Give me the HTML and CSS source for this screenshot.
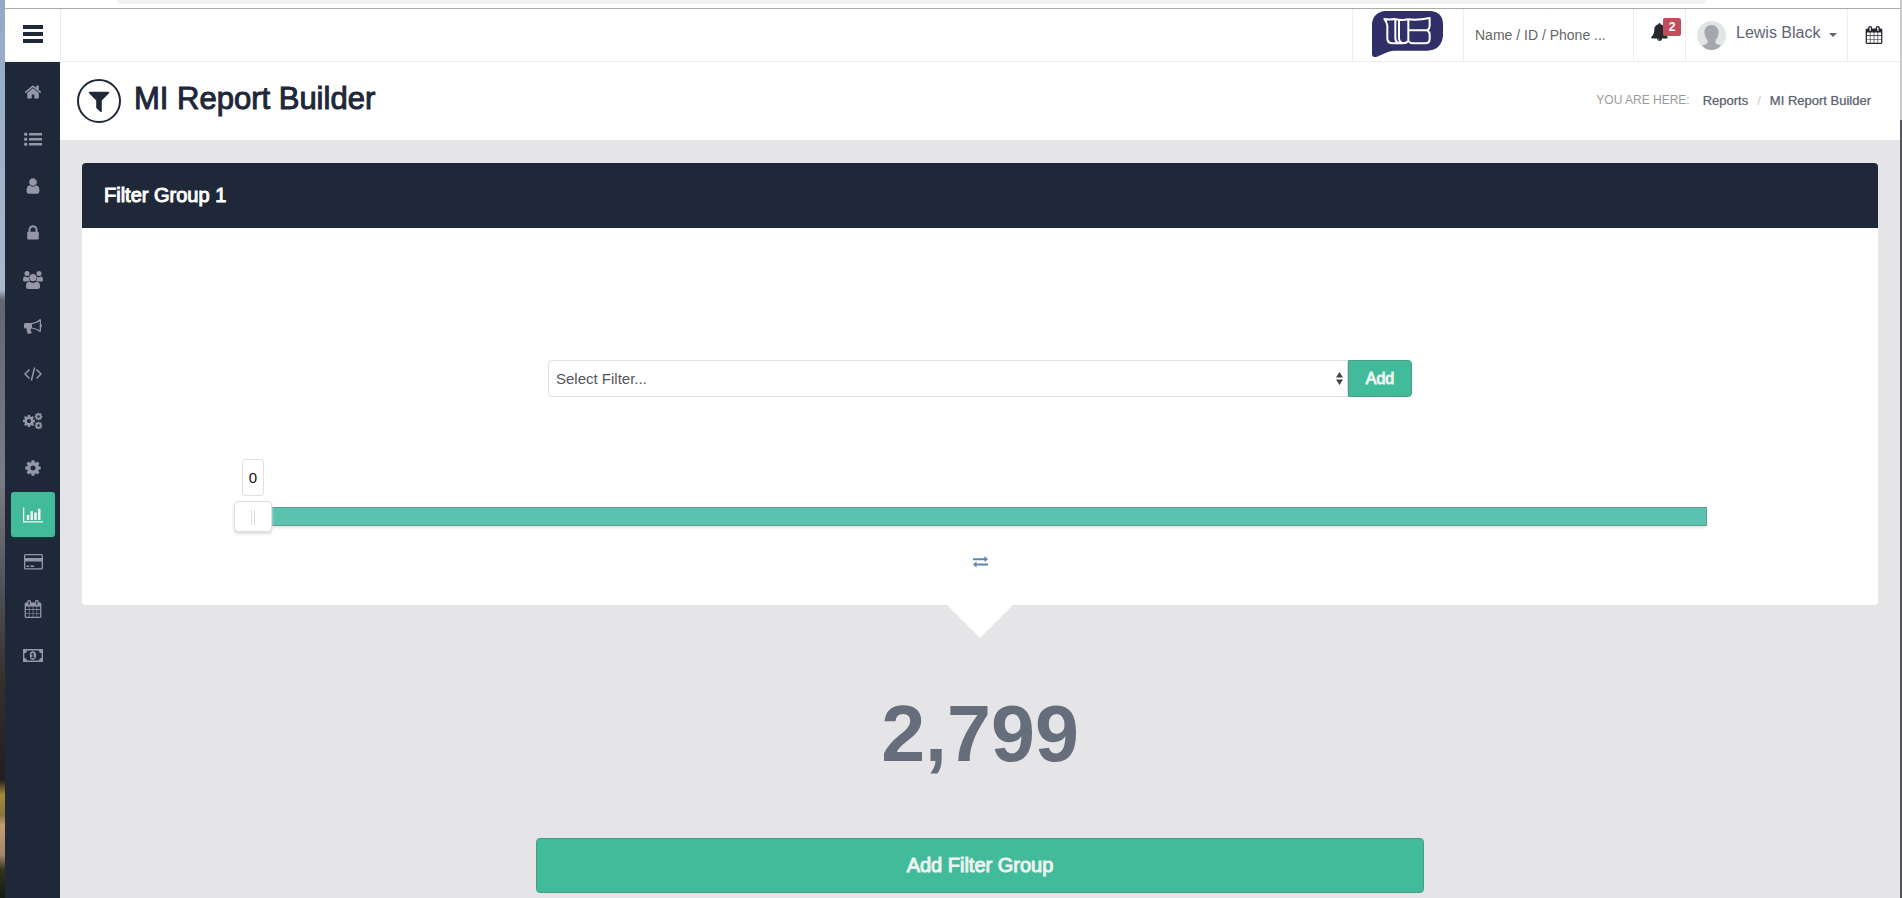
FILE: index.html
```html
<!DOCTYPE html>
<html lang="en">
<head>
<meta charset="utf-8">
<title>MI Report Builder</title>
<link rel="stylesheet" href="styles.css">
</head>
<body>
<svg class="sprite" aria-hidden="true">
  <symbol id="cog" viewBox="0 0 1792 1792"><path d="M1152 896q0-106-75-181t-181-75-181 75-75 181 75 181 181 75 181-75 75-181zm512-109v222q0 12-8 23t-20 13l-185 28q-19 54-39 91 35 50 107 138 10 12 10 25t-9 23q-27 37-99 108t-94 71q-12 0-26-9l-138-108q-44 23-91 38-16 136-29 186-7 28-36 28h-222q-14 0-24.500-8.500t-11.500-21.500l-28-184q-49-16-90-37l-141 107q-10 9-25 9-14 0-25-11-126-114-165-168-7-10-7-23 0-12 8-23 15-21 51-66.500t54-70.500q-27-50-41-99l-183-27q-13-2-21-12.500t-8-23.500v-222q0-12 8-23t19-13l186-28q14-46 39-92-40-57-107-138-10-12-10-24 0-10 9-23 26-36 98.500-107.500t94.500-71.500q13 0 26 10l138 107q44-23 91-38 16-136 29-186 7-28 36-28h222q14 0 24.500 8.500t11.500 21.500l28 184q49 16 90 37l142-107q9-9 24-9 13 0 25 10 129 119 165 170 7 8 7 22 0 12-8 23-15 21-51 66.500t-54 70.500q26 50 41 98l183 28q13 2 21 12.500t8 23.500z"/></symbol>
  <symbol id="calendar" viewBox="0 0 1792 1792"><path d="M192 1664h288v-288h-288v288zm352 0h320v-288h-320v288zm-352-352h288v-320h-288v320zm352 0h320v-320h-320v320zm-352-384h288v-288h-288v288zm736 736h320v-288h-320v288zm-384-736h320v-288h-320v288zm768 736h288v-288h-288v288zm-384-352h320v-320h-320v320zm-352-864v-288q0-13-9.500-22.500t-22.500-9.500h-64q-13 0-22.500 9.500t-9.500 22.500v288q0 13 9.500 22.500t22.500 9.500h64q13 0 22.500-9.500t9.500-22.500zm736 864h288v-320h-288v320zm-384-384h320v-288h-320v288zm384 0h288v-288h-288v288zm32-480v-288q0-13-9.500-22.500t-22.500-9.500h-64q-13 0-22.500 9.500t-9.500 22.500v288q0 13 9.500 22.500t22.500 9.500h64q13 0 22.500-9.500t9.500-22.500zm384-64v1280q0 52-38 90t-90 38h-1408q-52 0-90-38t-38-90v-1280q0-52 38-90t90-38h128v-96q0-66 47-113t113-47h64q66 0 113 47t47 113v96h384v-96q0-66 47-113t113-47h64q66 0 113 47t47 113v96h128q52 0 90 38t38 90z"/></symbol>
</svg>
<div class="window">
  <div class="chrome"><div class="address"></div></div>
  <header class="topbar">
    <button class="menu" type="button" aria-label="Toggle menu">
      <svg width="22" height="18" viewBox="0 0 22 18"><path d="M1 0h20v4H1zM1 7h20v4H1zM1 14h20v4H1z"/></svg>
    </button>
    <a class="cell brand" href="#" aria-label="Home page">
      <svg width="71" height="46" viewBox="0 0 213 138">
        <path class="bubble" d="M38 0H176Q213 4 213 40V74Q209 116 166 119H64Q52 120 42 125L15 137Q0 141 0 130V40Q2 5 38 0Z"/>
        <path class="mark" d="M37 24Q52 27 68 24Q88 29 108 25Q140 28 173 21V44Q173 53 166 58Q173 63 173 70V84Q173 97 160 97H124Q114 97 109 90Q103 97 92 97H62Q48 97 46 84V44Q44 32 37 24ZM70 26V80Q70 92 80 96M81 29V84Q82 92 90 96M109 27V90M110 58H166"/>
      </svg>
    </a>
    <div class="cell search"><input type="text" aria-label="Search" placeholder="Name / ID / Phone ..."></div>
    <button class="cell alerts" type="button" aria-label="Notifications">
      <svg width="17" height="18" viewBox="64 0 1664 1792"><path d="M912 1696q0-16-16-16-59 0-101.500-42.500t-42.500-101.500q0-16-16-16t-16 16q0 73 51.500 124.500t124.500 51.500q16 0 16-16zm816-288q0 52-38 90t-90 38h-448q0 106-75 181t-181 75-181-75-75-181h-448q-52 0-90-38t-38-90q50-42 91-88t85-119.500 74.500-158.500 50-206 19.500-260q0-152 117-282.500t307-158.500q-8-19-8-39 0-40 28-68t68-28 68 28 28 68q0 20-8 39 190 28 307 158.500t117 282.500q0 139 19.500 260t50 206 74.500 158.500 85 119.500 91 88z"/></svg>
      <span class="badge">2</span>
    </button>
    <button class="cell user" type="button">
      <svg width="29" height="29" viewBox="0 0 29 29"><circle cx="14.500" cy="14.500" r="14.500" fill="#e3e4e6"/><path fill="#a4a7ad" d="M14.500 4C19 4 21.500 7 21.500 11Q21.500 16 18.500 19V22Q19 23 24 24.500Q20 29 14.500 29T5 24.500Q10 23 10.500 22V19Q7.500 16 7.500 11C7.500 7 10 4 14.500 4Z"/></svg>
      <span>Lewis Black</span>
      <i class="caret"></i>
    </button>
    <button class="cell dates" type="button" aria-label="Calendar"><svg width="18" height="18"><use href="#calendar"/></svg></button>
  </header>
  <div class="layout">
    <nav class="sidebar" aria-label="Main">
      <a href="#" aria-label="Home"><svg width="18" height="18" viewBox="0 0 1792 1792"><path d="M1472 992v480q0 26-19 45t-45 19h-384v-384h-256v384h-384q-26 0-45-19t-19-45v-480q0-1 .5-3t.5-3l575-474 575 474q1 2 1 6zm223-69l-62 74q-8 9-21 11h-3q-13 0-21-7l-692-577-692 577q-12 8-24 7-13-2-21-11l-62-74q-8-10-7-23.500t11-21.500l719-599q32-26 76-26t76 26l244 204v-195q0-14 9-23t23-9h192q14 0 23 9t9 23v408l219 182q10 8 11 21.500t-7 23.500z"/></svg></a>
      <a href="#" aria-label="Lists"><svg width="18" height="14" viewBox="0 0 18 14"><path d="M5 1h13v2.600H5zM5 6h13v2.600H5zM5 11h13v2.600H5z"/><circle cx="1.700" cy="2.200" r="1.700"/><circle cx="1.700" cy="7.200" r="1.700"/><circle cx="1.700" cy="12.200" r="1.700"/></svg></a>
      <a href="#" aria-label="User"><svg width="18" height="18" viewBox="0 0 1792 1792"><path d="M1536 1399q0 109-62.500 187t-150.500 78h-854q-88 0-150.500-78t-62.500-187q0-85 8.500-160.500t31.500-152 58.500-131 94-89 134.500-34.500q131 128 313 128t313-128q76 0 134.500 34.500t94 89 58.500 131 31.500 152 8.500 160.500zm-256-887q0 159-112.500 271.500t-271.500 112.500-271.500-112.500-112.500-271.500 112.500-271.500 271.500-112.500 271.500 112.500 112.500 271.500z"/></svg></a>
      <a href="#" aria-label="Security"><svg width="18" height="18" viewBox="0 0 1792 1792"><path d="M640 768h512v-192q0-106-75-181t-181-75-181 75-75 181v192zm832 96v576q0 40-28 68t-68 28h-960q-40 0-68-28t-28-68v-576q0-40 28-68t68-28h32v-192q0-184 132-316t316-132 316 132 132 316v192h32q40 0 68 28t28 68z"/></svg></a>
      <a href="#" aria-label="Groups"><svg width="20" height="18" viewBox="0 0 20 18"><circle cx="4" cy="2.600" r="2.500"/><circle cx="16" cy="2.600" r="2.500"/><path d="M2 5.500Q4 7 6 5.800Q5.300 8.500 7 10Q4.500 10 3.500 10.500H1.500Q0 10.500 0 9Q0 5.500 2 5.500ZM18 5.500Q16 7 14 5.800Q14.700 8.500 13 10Q15.500 10 16.500 10.500H18.500Q20 10.500 20 9Q20 5.500 18 5.500Z"/><circle cx="10" cy="6.600" r="3.700"/><path d="M6.300 10.600Q10 13.400 13.700 10.600Q17 10.900 17 15.500Q17 18 14.500 18H5.500Q3 18 3 15.500Q3 10.900 6.300 10.600Z"/></svg></a>
      <a href="#" aria-label="Campaigns"><svg width="18" height="16" viewBox="0 0 18 16"><path fill-rule="evenodd" d="M16 0Q17 0 17 1V5.300Q18 5.700 18 6.700T17 8.200V12Q17 13 16 13Q12 9.800 7.300 9.600Q6.200 10.300 6.800 11.500Q6.500 12.500 8 13.800Q6.500 15.500 3.500 14.500Q2.600 12 2.700 9.600H1.600Q0 9.600 0 8V5.500Q0 3.900 1.600 3.900H6.500Q11.500 3.900 16 0ZM15.700 2.200Q12 4.800 8 5.200V8.400Q12 8.800 15.700 11.200Z"/></svg></a>
      <a href="#" aria-label="Code"><svg class="line" width="18" height="14" viewBox="0 0 18 14"><path d="M5.500 2.500L1 7L5.500 11.500M12.500 2.500L17 7L12.500 11.500M10.600 .5L7.400 13.500"/></svg></a>
      <a href="#" aria-label="Services"><svg width="20" height="18" viewBox="0 0 20 18"><use href="#cog" x="-1" y="2" width="14" height="14"/><use href="#cog" x="11" y="0" width="9" height="9"/><use href="#cog" x="11" y="9" width="9" height="9"/></svg></a>
      <a href="#" aria-label="Settings"><svg width="18" height="18"><use href="#cog"/></svg></a>
      <a class="active" href="#" aria-label="Reports"><svg width="20" height="18" viewBox="0 0 2048 1792"><path d="M640 896v512h-256v-512h256zm384-384v896h-256v-896h256zm1024 1024v128h-2048v-1536h128v1408h1920zm-640-896v768h-256v-768h256zm384-384v1152h-256v-1152h256z"/></svg></a>
      <a href="#" aria-label="Payments"><svg width="19" height="16" viewBox="0 0 19 16"><path fill-rule="evenodd" d="M1.600 0H17.400Q19 0 19 1.600V14Q19 15.500 17.400 15.500H1.600Q0 15.500 0 14V1.600Q0 0 1.600 0ZM1.300 1.300V4H17.700V1.300ZM1.300 7.500V14.200H17.700V7.500ZM2.500 11.600H5V12.900H2.500ZM6.300 11.600H10V12.900H6.300Z"/></svg></a>
      <a href="#" aria-label="Calendar"><svg width="18" height="18"><use href="#calendar"/></svg></a>
      <a href="#" aria-label="Finance"><svg width="20" height="13" viewBox="0 0 20 13"><path fill-rule="evenodd" d="M0 0H20V13H0ZM4 1.400Q4 4 1.400 4V9Q4 9 4 11.600H16Q16 9 18.600 9V4Q16 4 16 1.400ZM10 2.300Q13.200 2.600 13.200 6.500T10 10.700T6.800 6.500T10 2.300ZM9.500 4L8 5.300L8.700 6L9.300 5.600V8H8.200V9H11.700V8H10.600V4Z"/></svg></a>
    </nav>
    <main>
      <div class="heading">
        <span class="round"><svg width="26" height="26" viewBox="0 0 1792 1792"><path d="M1595 295q17 41-14 70l-493 493v742q0 42-39 59-13 5-25 5-27 0-45-19l-256-256q-19-19-19-45v-486l-493-493q-31-29-14-70 17-39 59-39h1280q42 0 59 39z"/></svg></span>
        <h1>MI Report Builder</h1>
        <nav class="crumbs" aria-label="Breadcrumb">
          <span class="here">YOU ARE HERE:</span>
          <a href="#">Reports</a>
          <span class="slash">/</span>
          <a href="#">MI Report Builder</a>
        </nav>
      </div>
      <div class="content">
        <section class="panel">
          <h2>Filter Group 1</h2>
          <div class="panel-body">
            <div class="picker">
              <div class="select">
                <select aria-label="Filter"><option>Select Filter...</option></select>
                <svg width="7" height="13" viewBox="0 0 7 13"><path d="M3.500 0L7 5.500H0ZM3.500 13L0 7.500H7Z"/></svg>
              </div>
              <button class="add" type="button">Add</button>
            </div>
            <div class="slider">
              <output for="amount">0</output>
              <input id="amount" type="range" min="0" max="2799" value="0" aria-label="Amount">
            </div>
            <a class="swap" href="#" aria-label="Swap">
              <svg width="15" height="12" viewBox="0 0 15 12"><path d="M0 2.300H11.500V0L15 3.300L11.500 6V4.200H0ZM15 7.500H3.500V5.500L0 8.500L3.500 11.500V9.400H15Z"/></svg>
            </a>
          </div>
        </section>
        <div class="pointer"></div>
        <div class="total">2,799</div>
        <button class="add-group" type="button">Add Filter Group</button>
      </div>
    </main>
  </div>
</div>
</body>
</html>
```
FILE: styles.css
```css
* { box-sizing: border-box; }

body {
  margin: 0;
  font-family: "Liberation Sans", Arial, sans-serif;
  font-size: 15px;
  color: #1f2838;
  background:
    linear-gradient(#c8c8c8 0 120px, #55565c 120px) right / 2px 100% no-repeat,
    linear-gradient(#93a9c6 0, #a9b8cb 290px, #62666f 300px, #7b7d85 480px, #4b4d54 600px, #372f2c 680px, #211e20 780px, #a58b35 795px, #8a7440 815px, #c39b74 825px, #a5876c 855px, #2f331d 870px, #171a12 100%);
}

button, input, select { font: inherit; }
button { border: 0; padding: 0; background: none; cursor: pointer; }
a { color: inherit; text-decoration: none; }
svg { display: block; fill: currentColor; flex: none; }
.sprite { position: absolute; width: 0; height: 0; }

.window {
  display: flex;
  flex-direction: column;
  min-height: 100vh;
  margin: 0 2px 0 5px;
  background: #fff;
}

.chrome { height: 9px; padding: 0 194px 0 112px; border-bottom: 1px solid #a9a9a9; }
.address { height: 4px; background: #f1f1f2; border-radius: 0 0 8px 8px; }

.topbar { display: flex; height: 53px; border-bottom: 1px solid #ededee; }
.menu {
  display: flex;
  align-items: center;
  justify-content: center;
  width: 56px;
  margin-right: auto;
  padding-bottom: 2px;
  border-right: 1px solid #ededee;
  color: #1f2838;
}
.cell {
  display: flex;
  align-items: center;
  border-left: 1px solid #ededee;
}
.brand { align-items: flex-start; width: 111px; padding: 2px 0 0 19px; }
.bubble { fill: #302f68; }
.mark { fill: none; stroke: #fff; stroke-width: 6; stroke-linejoin: round; }
.search { width: 170px; }
.search input {
  width: 100%;
  padding: 0 11px;
  border: 0;
  background: none;
  font-size: 14px;
  color: #666;
}
.search input::placeholder { color: #666; opacity: 1; }
.alerts { position: relative; width: 52px; padding: 0 0 6px 17px; color: #25282e; }
.badge {
  position: absolute;
  top: 9px;
  left: 29px;
  width: 18px;
  border-radius: 2px;
  background: #c64b5a;
  color: #fff;
  font-size: 12px;
  font-weight: bold;
  line-height: 18px;
  text-align: center;
}
.user { width: 162px; padding-left: 11px; color: #616675; font-size: 16px; }
.user span { padding: 0 9px 4px 10px; }
.caret { border: 4px solid transparent; border-top-color: #616675; border-bottom: 0; }
.dates { width: 53px; padding-left: 17px; color: #25282e; }

.layout { display: flex; flex: 1; }

.sidebar {
  display: flex;
  flex-direction: column;
  flex: none;
  gap: 2px;
  width: 55px;
  padding: 7px 5px 6px 6px;
  background: #1f2838;
  color: #9597a6;
}
.sidebar a {
  display: flex;
  align-items: center;
  justify-content: center;
  height: 45px;
  border-radius: 3px;
}
.sidebar .active {
  background: #42bb9a;
  color: #f3f5f4;
  box-shadow: 0 1px 3px #0b4a3a;
}
.line { fill: none; stroke: currentColor; stroke-width: 1.500; }

main { display: flex; flex-direction: column; flex: 1; min-width: 0; }

.heading { display: flex; align-items: center; height: 78px; padding: 0 29px 0 17px; }
.round {
  display: grid;
  place-items: center;
  width: 44px;
  height: 44px;
  border: 2px solid #1f2838;
  border-radius: 50%;
}
h1 {
  margin: 0 auto 4px 13px;
  font-size: 31px;
  font-weight: normal;
  line-height: 36px;
  -webkit-text-stroke: 1px;
}
.crumbs { display: flex; align-items: center; padding-bottom: 2px; color: #5d6271; font-size: 13px; }
.crumbs a { text-shadow: 0 0 1px #a0a4ad; }
.here { margin-right: 13px; color: #999; font-size: 12px; }
.slash { margin: 0 9px; color: #ccc; }

.content {
  display: flex;
  flex-direction: column;
  align-items: center;
  flex: 1;
  padding: 23px 22px 5px;
  background: #e5e5e7;
}
.panel { align-self: stretch; border-radius: 4px; background: #fff; }
h2 {
  margin: 0;
  padding: 0 22px;
  border-radius: 4px 4px 0 0;
  background: #1f2838;
  color: #fff;
  font-size: 20px;
  font-weight: normal;
  line-height: 65px;
  -webkit-text-stroke: 1px;
}
.panel-body {
  display: flex;
  flex-direction: column;
  align-items: center;
  padding: 132px 0 37px;
}
.picker { display: flex; width: calc(50% - 34px); height: 37px; }
.select { position: relative; flex: 1; }
.select select {
  width: 100%;
  height: 100%;
  padding: 0 7px;
  border: 1px solid #e0e0e2;
  border-radius: 4px 0 0 4px;
  appearance: none;
  background: #fff;
  color: #55555a;
}
.select svg { position: absolute; top: 12px; right: 5px; color: #444; pointer-events: none; }
.add, .add-group {
  border: 1px solid #4a9d87;
  background: #42bb9a;
  color: #eef3f1;
  -webkit-text-stroke: 1px;
}
.add { width: 64px; border-radius: 0 4px 4px 0; font-size: 16px; }

.slider {
  display: flex;
  flex-direction: column;
  align-items: flex-start;
  align-self: stretch;
  gap: 4px;
  padding: 62px 171px 0 152px;
}
.slider output {
  width: 22px;
  margin-left: 8px;
  border: 1px solid #e0e0e0;
  border-radius: 3px;
  color: #111;
  line-height: 35px;
  text-align: center;
}
.slider input {
  width: 100%;
  height: 32px;
  margin: 0;
  appearance: none;
  background: none;
}
.slider input::-webkit-slider-runnable-track {
  height: 19px;
  border: 1px solid #619f95;
  border-left: 0;
  background: #5bc2b0;
  box-shadow: 0 2px 2px #e6e6e6;
}
.slider input::-webkit-slider-thumb {
  width: 38px;
  height: 31px;
  margin-top: -7px;
  border: 1px solid #dedede;
  border-radius: 4px;
  appearance: none;
  background:
    linear-gradient(#ddd, #ddd) 16px 8px / 1px 15px no-repeat,
    linear-gradient(#ddd, #ddd) 19px 8px / 1px 15px no-repeat,
    #fff;
  box-shadow: 0 2px 3px #ddd;
}
.swap { margin-top: 24px; color: #5c86ad; }

.pointer {
  border: 33px solid transparent;
  border-top-color: #fff;
  border-bottom: 0;
}
.total {
  margin-top: 51px;
  color: #666e7c;
  font-size: 79px;
  font-weight: bold;
  line-height: 90px;
}
.add-group {
  width: calc(50% - 10px);
  height: 55px;
  margin-top: 59px;
  border-radius: 4px;
  font-size: 20px;
}
```
